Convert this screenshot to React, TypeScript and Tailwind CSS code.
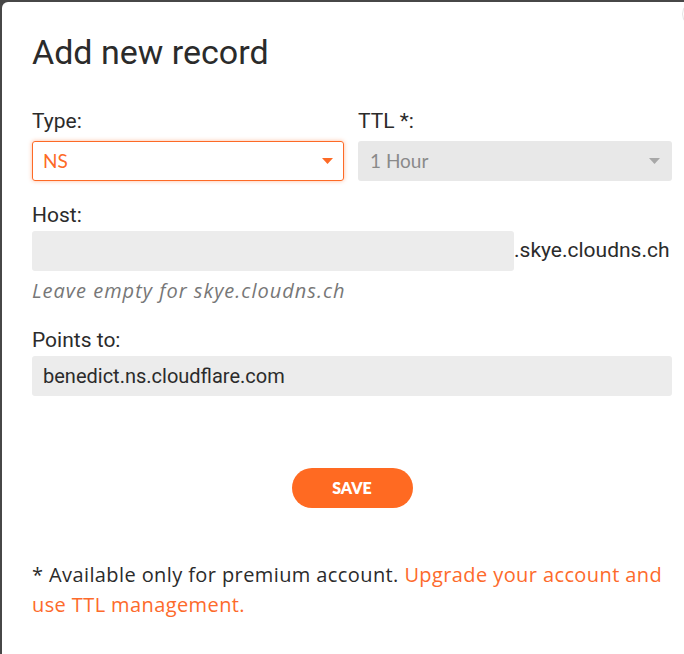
import React from "react";

const nunito = { fontFamily: "Lato, 'Noto Sans', sans-serif" };
const open = { fontFamily: "'Open Sans', 'Noto Sans', sans-serif" };
const roboto = { fontFamily: "Roboto, 'Liberation Sans', sans-serif" };

function Caret({ color }: { color: string }) {
  return (
    <svg width="11" height="6" viewBox="0 0 11 6" className="shrink-0">
      <path d="M0 0 L11 0 L5.5 6 Z" fill={color} />
    </svg>
  );
}

export default function App() {
  return (
    <div className="h-[654px] w-[684px] overflow-hidden bg-[#474747] pl-[2px] pt-[2px]">
      <div className="relative h-full rounded-tl-[6px] bg-white pl-[30px] pr-[12px] pt-[30px]">
        <div className="pointer-events-none absolute right-[-26px] top-[-2px] h-[28px] w-[28px] rounded-full border border-[#e4e4e4]" />
        <h1 className="text-[34px] leading-[40px] text-[#2b2b2b]" style={roboto}>
          Add new record
        </h1>

        <div className="mt-[35px] flex gap-[14px]">
          <div className="w-[312px]">
            <div className="text-[21px] leading-[28px] text-[#2b2b2b]" style={roboto}>
              Type:
            </div>
            <div className="mt-[6px] flex h-[40px] items-center justify-between rounded-[3px] border border-[#fd6a26] pl-[10px] pr-[10px] shadow-[0_0_4px_rgba(253,106,38,0.45)]">
              <span className="text-[19px] text-[#fd6a26]" style={nunito}>
                NS
              </span>
              <Caret color="#fd6a26" />
            </div>
          </div>
          <div className="flex-1">
            <div className="text-[21px] leading-[28px] text-[#2b2b2b]" style={roboto}>
              TTL *:
            </div>
            <div className="mt-[6px] flex h-[40px] items-center justify-between rounded-[3px] bg-[#e8e8e8] pl-[12px] pr-[12px]">
              <span className="text-[19px] text-[#8a8a8a]" style={nunito}>
                1 Hour
              </span>
              <Caret color="#a8a8a8" />
            </div>
          </div>
        </div>

        <div className="mt-[20px] text-[21px] leading-[28px] text-[#2b2b2b]" style={roboto}>
          Host:
        </div>
        <div className="mt-[2px] flex h-[40px] items-center">
          <div className="h-full w-[482px] rounded-[3px] bg-[#ececec]" />
          <span className="text-[21px] text-[#2b2b2b]" style={roboto}>
            .skye.cloudns.ch
          </span>
        </div>
        <div className="mt-[6px] text-[20px] italic leading-[28px] tracking-[1px] text-[#777777]" style={open}>
          Leave empty for skye.cloudns.ch
        </div>

        <div className="mt-[21px] text-[21px] leading-[28px] text-[#2b2b2b]" style={roboto}>
          Points to:
        </div>
        <div className="mt-[2px] flex h-[40px] items-center rounded-[3px] bg-[#ececec] pl-[11px]">
          <span className="text-[20px] text-[#2b2b2b]" style={roboto}>
            benedict.ns.cloudflare.com
          </span>
        </div>

        <div className="mt-[72px] flex justify-center">
          <button
            className="h-[40px] w-[121px] rounded-full bg-[#ff6a22] text-[16px] font-extrabold text-white"
            style={nunito}
          >
            SAVE
          </button>
        </div>

        <p className="mt-[52px] text-[20px] leading-[30px] tracking-[0.4px] text-[#2b2b2b]" style={open}>
          * Available only for premium account.{" "}
          <span className="text-[#fd6a2b]">Upgrade your account and use TTL management.</span>
        </p>
      </div>
    </div>
  );
}
